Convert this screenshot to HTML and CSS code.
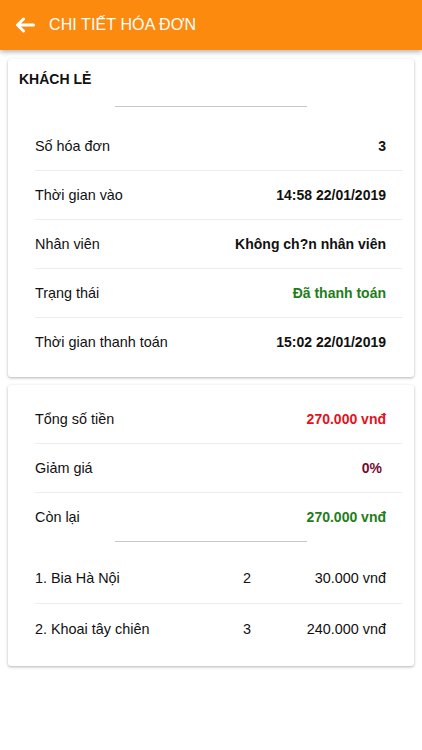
FILE: index.html
```html
<!DOCTYPE html>
<html lang="vi">
<head>
<meta charset="UTF-8">
<meta name="viewport" content="width=device-width, initial-scale=1.0">
<title>Chi tiết hóa đơn</title>
<link rel="stylesheet" href="styles.css">
</head>
<body>
<header class="topbar">
<a href="#" class="back-btn">
<svg width="20" height="16" viewBox="0 0 20 16"><path d="M18.5 8H3M8.5 2L2.5 8l6 6" fill="none" stroke="#fff" stroke-width="3" stroke-linecap="round" stroke-linejoin="round"/></svg>
</a>
<h1 class="title">CHI TIẾT HÓA ĐƠN</h1>
</header>

<div class="content">
<div class="card">
<div class="customer">KHÁCH LẺ</div>
<div class="short-line"></div>
<div class="rows">
<div class="row"><span class="label">Số hóa đơn</span><span class="value">3</span></div>
<div class="row"><span class="label">Thời gian vào</span><span class="value">14:58 22/01/2019</span></div>
<div class="row"><span class="label">Nhân viên</span><span class="value">Không ch?n nhân viên</span></div>
<div class="row"><span class="label">Trạng thái</span><span class="value green">Đã thanh toán</span></div>
<div class="row"><span class="label">Thời gian thanh toán</span><span class="value">15:02 22/01/2019</span></div>
</div>
</div>

<div class="card card-total">
<div class="rows">
<div class="row"><span class="label">Tổng số tiền</span><span class="value red">270.000 vnđ</span></div>
<div class="row"><span class="label">Giảm giá</span><span class="value dark-red">0%</span></div>
<div class="row"><span class="label">Còn lại</span><span class="value green">270.000 vnđ</span></div>
</div>
<div class="short-line items-line"></div>
<div class="rows">
<div class="row item"><span class="label">1. Bia Hà Nội</span><span class="qty">2</span><span class="price">30.000 vnđ</span></div>
<div class="row item"><span class="label">2. Khoai tây chiên</span><span class="qty">3</span><span class="price">240.000 vnđ</span></div>
</div>
</div>
</div>
</body>
</html>
```

FILE: styles.css
```css
* {
margin: 0;
padding: 0;
box-sizing: border-box;
font-family: 'Liberation Sans', Arial, sans-serif;
}
body {
background-color: #fff;
color: #111;
width: 422px;
min-height: 750px;
}
.topbar {
height: 50px;
background-color: #fb8a0e;
display: flex;
align-items: center;
padding-left: 15px;
box-shadow: 0 2px 5px rgba(0, 0, 0, 0.3);
position: relative;
}
.back-btn {
display: flex;
width: 20px;
height: 16px;
}
.title {
margin-left: 14px;
font-size: 16px;
font-weight: normal;
color: #fff;
letter-spacing: 0.1px;
}
.content {
padding: 9px 8px;
}
.card {
background: #fff;
border-radius: 3px;
box-shadow: 0 1px 3px rgba(0, 0, 0, 0.3);
padding: 11px 11px 11px;
}
.card-total {
margin-top: 8px;
padding: 10px 11px 12px;
}
.customer {
font-size: 14px;
font-weight: bold;
line-height: 18px;
}
.short-line {
width: 50%;
height: 1px;
background: #c9c6c6;
margin: 18px auto 15px;
}
.items-line {
margin: 0 auto 11px;
}
.rows {
margin-left: 16px;
}
.row {
display: flex;
justify-content: space-between;
align-items: center;
padding: 15px 17px 15px 0;
line-height: 18px;
border-bottom: 1px solid #ededed;
font-size: 14.4px;
}
.row:last-child {
border-bottom: none;
}
.value {
font-size: 14px;
font-weight: bold;
}
.red {
color: #e5121c;
}
.dark-red {
color: #7a0a2e;
padding-right: 4px;
}
.green {
color: #1f7d1a;
}
.item {
display: grid;
grid-template-columns: 182px 60px 1fr;
padding: 16px 17px 16px 0;
}
.qty {
text-align: center;
}
.price {
text-align: right;
}
```
